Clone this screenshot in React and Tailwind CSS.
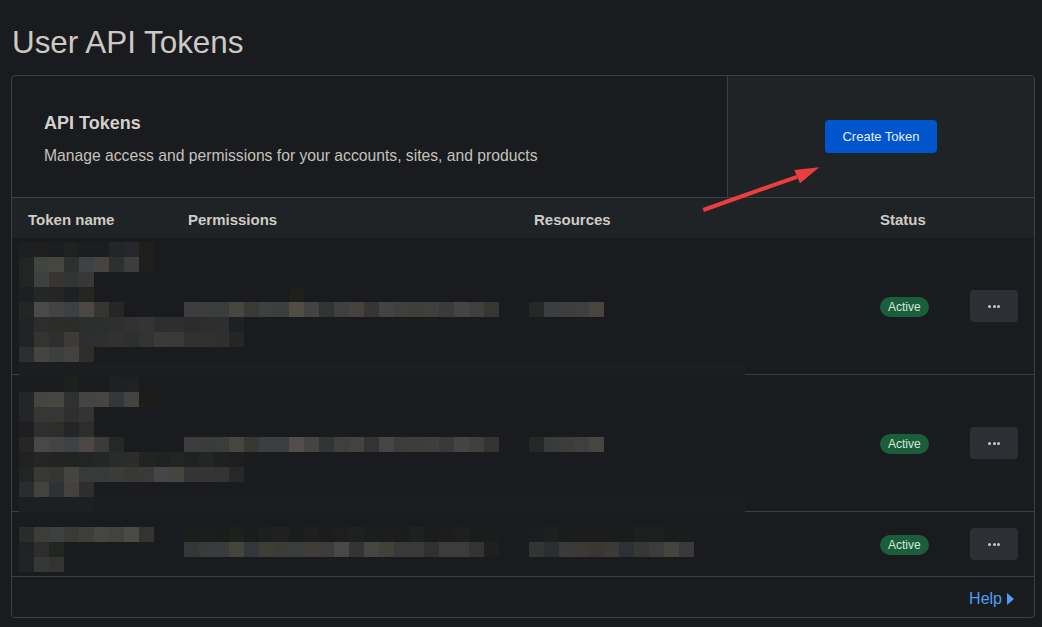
import React from "react";

const COLS = "grid grid-cols-[160px_346px_346px_90px_1fr]";

// pixelated redaction blocks, 15px cells, [startCol, colours]
const ROW1 = [
  [[0, ["1c1f20", "1d1e1d", "1c1d1e", "202220", "1c1d1f", "1c1d1f", "232528", "25272a", "1e1f1d"]]],
  [[0, ["232524", "424442", "46463f", "2e302e", "3f4244", "47443f", "2e3030", "3c3e3d", "1f1e1a"]]],
  [[0, ["232524", "3f413f", "363532", "333434", "393838"]]],
  [[0, ["1e1f21", "242627", "252624", "1f2023", "242624"]], [18, ["1d1f1d"]]],
  [
    [0, ["242625", "4a4a48", "434343", "3c4042", "4c4743", "363532", "252625"]],
    [11, ["3d3d3d", "3b3d3b", "3b3d3c", "48473f", "3a3936", "3c4140", "3c3f3e", "524c47", "434341", "313433", "3e403d", "46433f", "353535", "434343", "3f3f3e", "3e3e3b", "3f3f3d", "3a3a3a", "454442", "403f3d", "363633"]],
    [34, ["262826", "3b3e3e", "3e3e3c", "3f3f40", "48443f"]],
  ],
  [[0, ["222324", "2c2e2d", "2b2d2b", "2a2c2a", "2c2e2d", "2d2f2e", "2f2f2f", "343230", "353434", "2d2f2e", "2d2f2e", "2b2d2c", "2c2d2c", "2d2e2e", "1f2023"]]],
  [[0, ["222324", "343332", "302f2e", "3c3b38", "2c2e31", "2e302f", "323030", "2e2f2f", "323433", "3a3a39", "3a3938", "2f312f", "2f302f", "312f2e", "242625"]]],
  [[0, ["2b2d30", "444441", "3d3f3f", "43423f", "2f2e2a"]]],
  "band",
];

const ROW2 = [
  [[3, ["1e201e"]], [6, ["1f2022", "202123"]]],
  [[0, ["232628", "444441", "474641", "2e3031", "434443", "48453f", "34373a", "434441", "1c1c19"]]],
  [[0, ["242524", "363634", "363634", "2e2f2e", "343434"]]],
  [[0, ["1e1f21", "2e2f2e", "2d2d2c", "242527", "2c2e2c"]]],
  [
    [0, ["262625", "484848", "444444", "3f4244", "4b4746", "3b3b38", "262826"]],
    [11, ["3c3c3c", "3a3c3b", "3b3d3c", "46453f", "383734", "3b3f3f", "3b3f3f", "534c4a", "444442", "323533", "3f403e", "44413e", "333333", "454545", "3c3c3b", "3d3d3b", "3e3e3c", "393939", "454443", "403f3d", "34332f"]],
    [34, ["262827", "393b3b", "3d3c3b", "3f3f40", "48443f"]],
  ],
  [[0, ["202222", "242624", "222422", "222422", "232525", "242627", "2a2c2c", "2c2c2b", "222422", "202220", "232525", "202220", "232527", "1f2021", "1d1e20"]]],
  [[0, ["232523", "393836", "353533", "454540", "373a3a", "383a39", "3b3b3a", "393837", "3a3938", "464648", "45453f", "343434", "353433", "333332", "262826"]]],
  [[0, ["2a2d2f", "43423f", "2f3234", "434240", "2e2e2c"]]],
  "band2",
];

const ROW3 = [
  [],
  [
    [0, ["2a2c2b", "3d3d38", "3e4040", "393a36", "3e3e3b", "474741", "424240", "4a4a46", "33332f"]],
    [11, ["1c1e1e", "1c1d1d", "1b1c1c", "1e201e", "1b1c1c", "1e1f21", "1f201f", "1b1c1c", "1e1f21", "1b1c1c", "1d1e20", "1f2020", "1c1d1d", "1b1d1e", "1b1c1c", "1d2122", "1b1c1c", "1c1d1d", "1e201e", "1b1c1c", "1b1c1c"]],
    [34, ["1c1d1f", "1e201e", "1b1c1c", "1b1c1c", "1b1c1c", "1b1c1c", "1b1c1c", "1e1f21", "1e201e", "1b1c1c", "1b1c1c"]],
  ],
  [
    [0, ["202224", "2d2d2c", "232523"]],
    [11, ["353736", "393b3b", "393b3c", "45453f", "33363a", "3e3d38", "3d3b38", "3b3d3b", "3f3c39", "3d3c3a", "4a4846", "333534", "454544", "41413a", "3a3937", "393a38", "2f302f", "3d3c3a", "3d3c3a", "333333", "1e1f1f"]],
    [34, ["333534", "2a2e2f", "3b3a3a", "3c3934", "393634", "3b3a39", "2d3135", "373737", "3b3c3c", "45443e", "383938"]],
  ],
  [[0, ["212325", "363837", "333331"]]],
];

function Mosaic({ rows, top }) {
  const cell = 15;
  const width = 726;
  return (
    <svg
      className="absolute left-[7px] pointer-events-none"
      style={{ top }}
      width={width}
      height={rows.length * cell}
      viewBox={`0 0 ${width} ${rows.length * cell}`}
    >
      {rows.map((row, r) => {
        if (row === "band" || row === "band2") {
          const extra = row === "band2"
            ? [0, 1, 2, 3, 4].map((c) => (
                <rect key={c} x={c * cell} y={r * cell} width={cell} height={cell} fill="#1e1f21" />
              ))
            : null;
          return (
            <g key={r}>
              <rect x="0" y={r * cell} width={width} height={cell} fill="#1c1d20" />
              {extra}
            </g>
          );
        }
        return (
          <g key={r}>
            {row.flatMap(([start, colours]) =>
              colours.map((c, i) => (
                <rect
                  key={`${start}-${i}`}
                  x={(start + i) * cell}
                  y={r * cell}
                  width={cell}
                  height={cell}
                  fill={`#${c}`}
                />
              ))
            )}
          </g>
        );
      })}
    </svg>
  );
}

function Badge() {
  return (
    <span className="inline-flex h-[20px] items-center rounded-full bg-[#1b5e3c] px-2 text-[12px] text-[#d2e9da]">
      Active
    </span>
  );
}

function MoreButton() {
  return (
    <button className="flex h-[32px] w-[48px] items-center justify-center gap-[1.5px] rounded-[4px] bg-[#2c2f33]">
      <span className="h-[3px] w-[3px] rounded-full bg-[#c8c8c8]" />
      <span className="h-[3px] w-[3px] rounded-full bg-[#c8c8c8]" />
      <span className="h-[3px] w-[3px] rounded-full bg-[#c8c8c8]" />
    </button>
  );
}

function TokenRow({ height, rows, top }) {
  return (
    <div className={`relative ${COLS} ${height} items-center border-b border-[#3a3d41]`}>
      <div />
      <div />
      <div />
      <div className="pl-4">
        <Badge />
      </div>
      <div className="pl-4">
        <MoreButton />
      </div>
      <Mosaic rows={rows} top={top} />
    </div>
  );
}

export default function App() {
  return (
    <div className="relative min-h-[627px] overflow-hidden bg-[#1a1b1e] font-['Liberation_Sans',Arial,sans-serif]">
      <h1 className="pl-[12px] pt-[25px] text-[31.4px] leading-[36px] font-normal text-[#cdc9c4]">
        User API Tokens
      </h1>

      <div className="ml-[11px] mt-[14px] w-[1024px] overflow-hidden rounded-[4px] border border-[#3c3f43]">
        <div className="flex h-[122px] border-b border-[#3c3f43]">
          <div className="w-[716px] border-r border-[#3a3d41] pl-8 pt-[35px]">
            <h2 className="text-[18px] leading-[24px] font-bold text-[#d3d0cb]">API Tokens</h2>
            <p className="mt-[10px] text-[15.7px] leading-[22px] text-[#c5c2bd]">
              Manage access and permissions for your accounts, sites, and products
            </p>
          </div>
          <div className="flex flex-1 items-center justify-center bg-[#202325]">
            <button className="h-[33px] w-[112px] rounded-[4px] bg-[#0055cc] text-[13px] text-[#e8eef8]">
              Create Token
            </button>
          </div>
        </div>

        <div className={`${COLS} h-[40px] items-center bg-[#202325] pt-[4px] text-[15px] font-bold text-[#cfcbc5]`}>
          <div className="pl-4">Token name</div>
          <div className="pl-4">Permissions</div>
          <div className="pl-4">Resources</div>
          <div className="pl-4">Status</div>
          <div />
        </div>

        <TokenRow height="h-[137px]" rows={ROW1} top={4} />
        <TokenRow height="h-[137px]" rows={ROW2} top={2} />
        <TokenRow height="h-[65px]" rows={ROW3} top={0} />

        <div className="flex h-[40px] items-center justify-end gap-[5px] pr-5 pt-1">
          <span className="text-[16px] text-[#4b9df7]">Help</span>
          <svg width="7" height="12" viewBox="0 0 7 12">
            <polygon points="0,0 7,6 0,12" fill="#4b9df7" />
          </svg>
        </div>
      </div>

      {/* annotation arrow */}
      <svg
        className="pointer-events-none absolute left-[700px] top-[163px]"
        width="125"
        height="50"
        viewBox="0 0 125 50"
      >
        <line x1="3.3" y1="47" x2="97" y2="13.8" stroke="#ec3e3e" strokeWidth="4" />
        <polygon points="119.3,4.3 94.3,7 100,20.3" fill="#ec3e3e" />
      </svg>
    </div>
  );
}
